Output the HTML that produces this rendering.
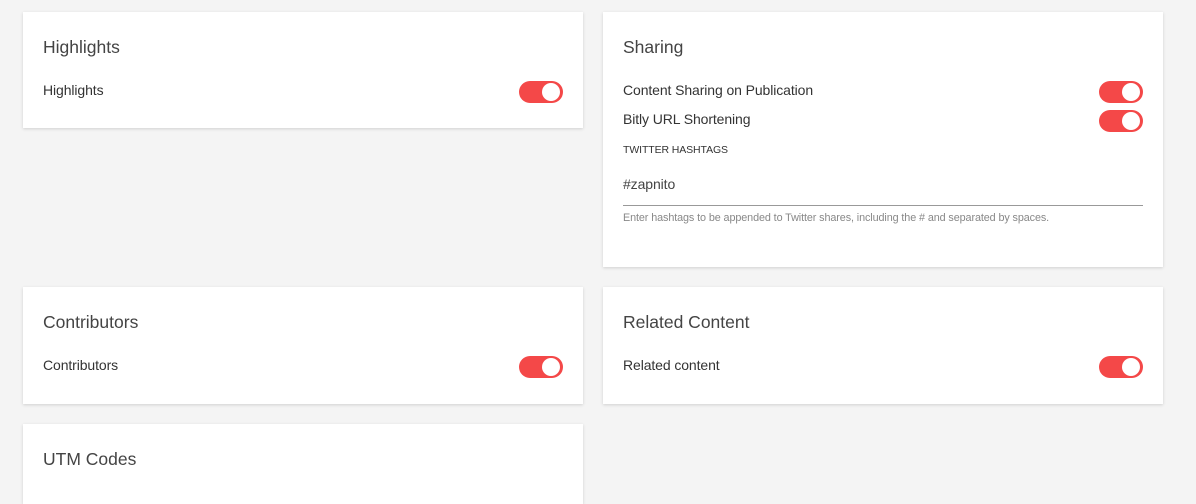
<!DOCTYPE html>
<html><head><style>
body{margin:0;background:#f4f4f4;width:1196px;height:492px;overflow:hidden;font-family:"Liberation Sans",sans-serif;color:#333;position:relative}
.card{position:absolute;background:#fff;box-shadow:0 1px 3px rgba(0,0,0,0.15);width:560px}
.t{position:absolute;left:20px;top:25px;font-size:17.5px;font-weight:300;color:#444}
.l{position:absolute;left:20px;font-size:14px;color:#333;letter-spacing:-0.1px}
.tg{position:absolute;right:20px;width:44px;height:22px;border-radius:11px;background:#f44848}
.tg:after{content:"";position:absolute;right:3px;top:2px;width:18px;height:18px;border-radius:50%;background:#fff}
</style></head><body>
<div class="card" style="left:23px;top:12px;height:116px">
<div class="t">Highlights</div><div class="l" style="top:70px">Highlights</div><div class="tg" style="top:69px"></div></div>
<div class="card" style="left:603px;top:12px;height:255px">
<div class="t">Sharing</div>
<div class="l" style="top:70px">Content Sharing on Publication</div><div class="tg" style="top:69px"></div>
<div class="l" style="top:99px">Bitly URL Shortening</div><div class="tg" style="top:98px"></div>
<div class="l" style="top:132px;font-size:10.5px">TWITTER HASHTAGS</div>
<div class="l" style="top:164px;color:#444">#zapnito</div>
<div style="position:absolute;left:20px;right:20px;top:193px;border-top:1px solid #999"></div>
<div class="l" style="top:200px;font-size:10.8px;color:#888">Enter hashtags to be appended to Twitter shares, including the # and separated by spaces.</div>
</div>
<div class="card" style="left:23px;top:287px;height:117px">
<div class="t">Contributors</div><div class="l" style="top:70px">Contributors</div><div class="tg" style="top:69px"></div></div>
<div class="card" style="left:603px;top:287px;height:117px">
<div class="t">Related Content</div><div class="l" style="top:70px">Related content</div><div class="tg" style="top:69px"></div></div>
<div class="card" style="left:23px;top:424px;height:80px">
<div class="t">UTM Codes</div></div>
</body></html>
